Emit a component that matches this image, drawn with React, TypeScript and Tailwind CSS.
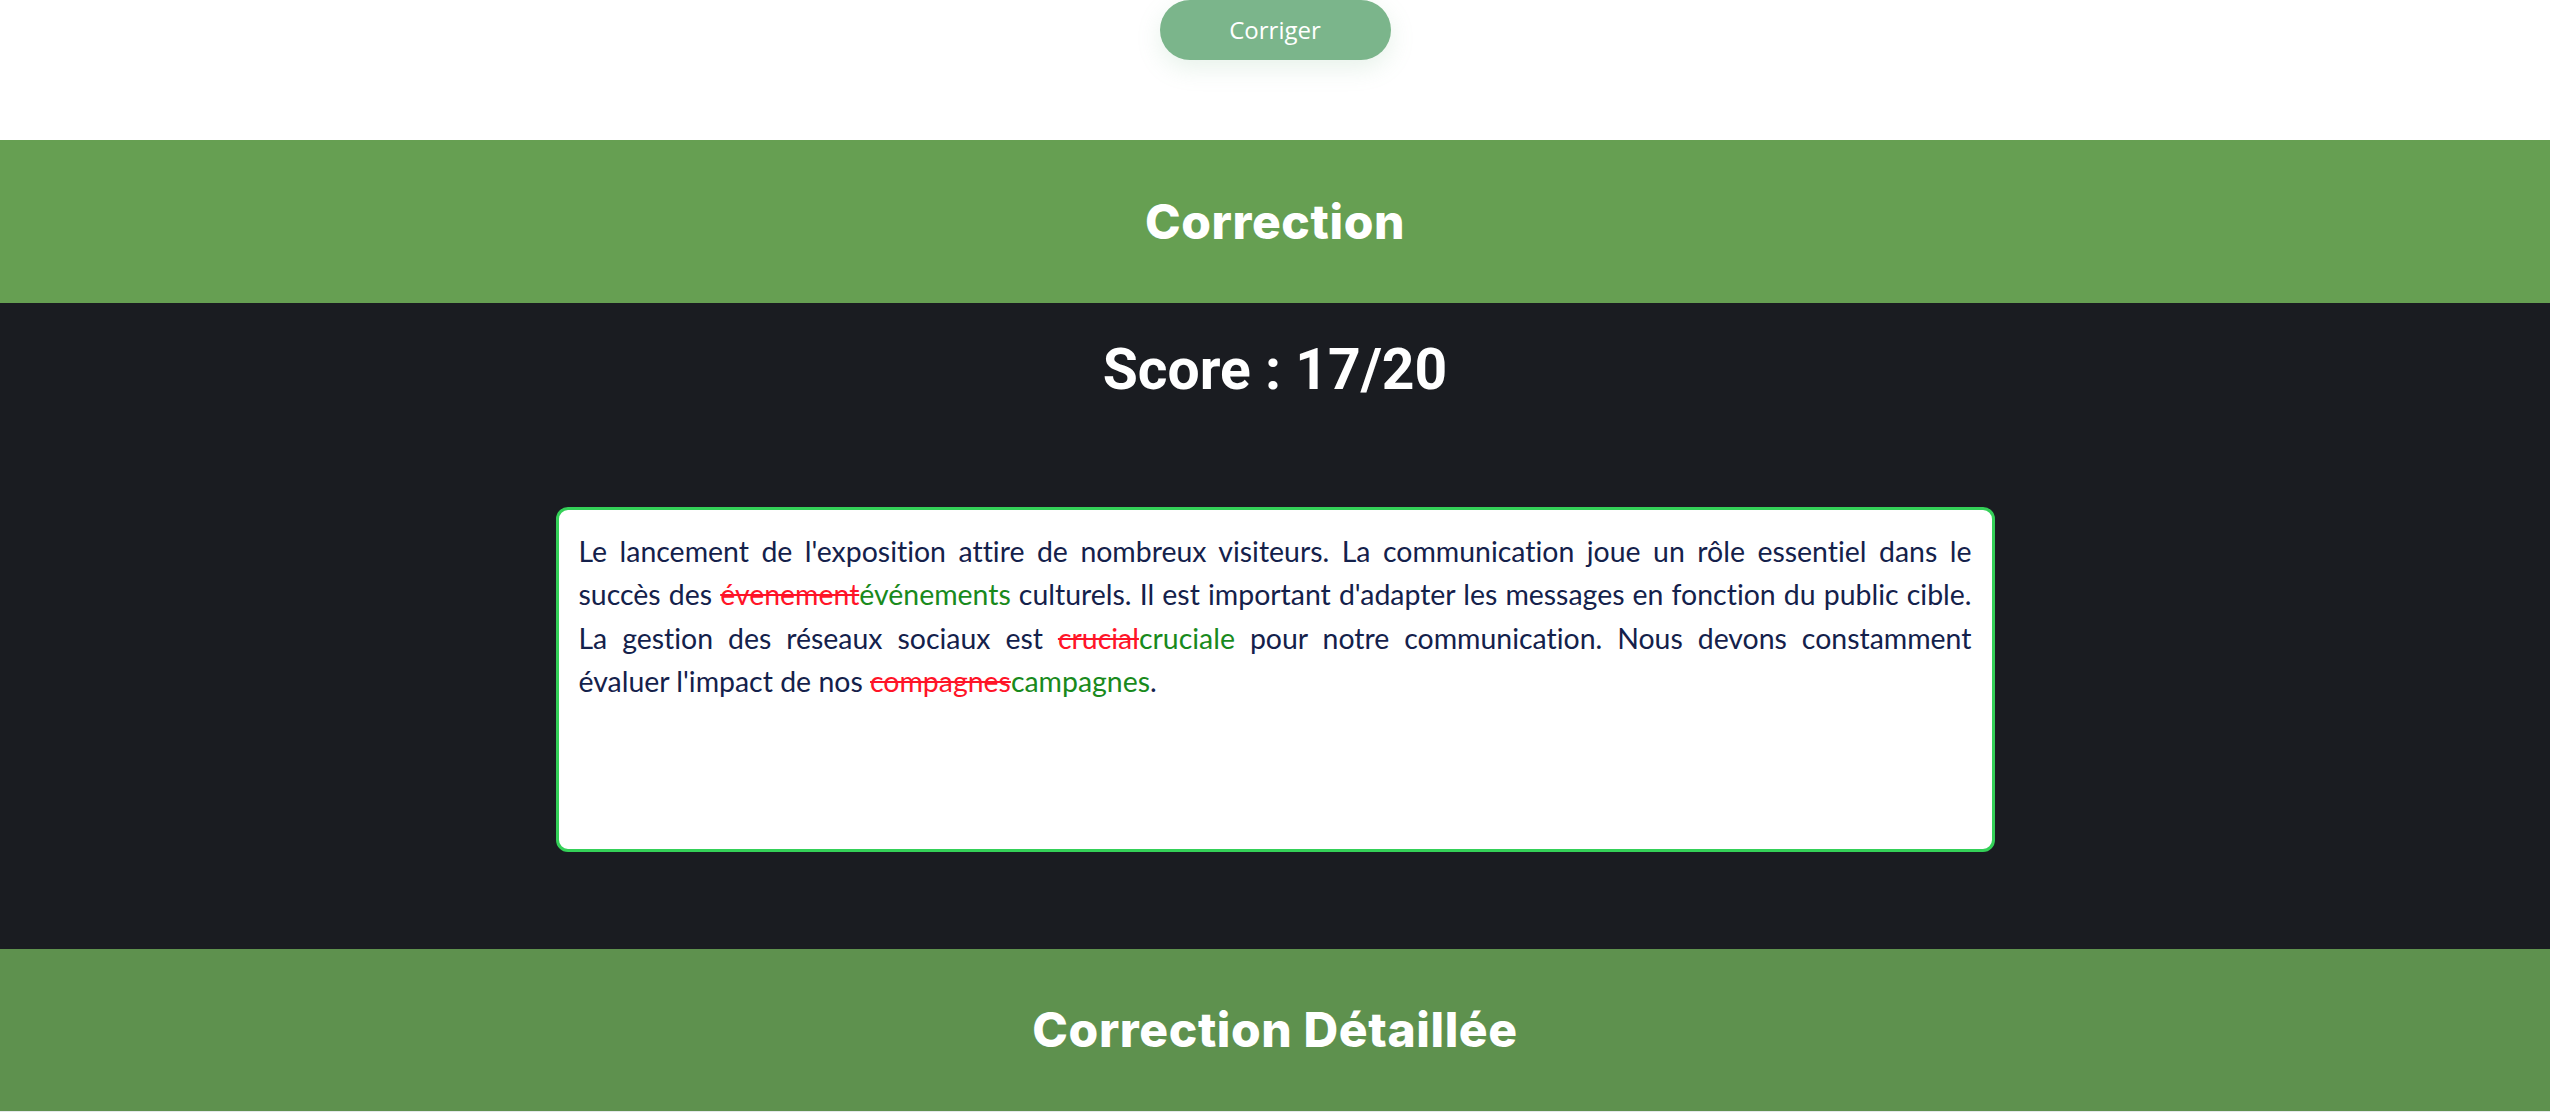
export default function App() {
  const navy = "text-[#14214b]";
  return (
    <div className="w-full min-h-screen bg-white">
      {/* bouton corriger */}
      <div className="h-[140px] flex justify-center">
        <button className="w-[231px] h-[60px] rounded-full bg-[#7bb58b] text-white text-[24px] font-medium font-['Open_Sans',sans-serif] shadow-[0_8px_24px_rgba(123,181,139,0.18)]">
          Corriger
        </button>
      </div>

      <div className="h-[163px] bg-[#669f52] flex items-center justify-center">
        <h2 className="text-white text-[48px] font-extrabold leading-none tracking-[0.6px] font-['Inter',sans-serif]">
          Correction
        </h2>
      </div>

      <div className="bg-[#1a1c21] pt-[38px] pb-[97px] flex flex-col items-center">
        <h3 className="text-white text-[57px] font-bold leading-none font-['Roboto',sans-serif]">
          Score : 17/20
        </h3>
        <div className="mt-[109px] w-[1439px] h-[345px] bg-white border-[3px] border-[#34d058] rounded-[12px] px-[20px] py-[20px]">
          <p
            className={`${navy} text-[28.45px] leading-[43.4px] text-justify font-['Lato',sans-serif] [font-variant-ligatures:none]`}
          >
            Le lancement de l'exposition attire de nombreux visiteurs. La
            communication joue un rôle essentiel dans le succès des{" "}
            <span className="text-[#ff1428] line-through">évenement</span>
            <span className="text-[#198a1c]">événements</span> culturels. Il
            est important d'adapter les messages en fonction du public cible.
            La gestion des réseaux sociaux est{" "}
            <span className="text-[#ff1428] line-through">crucial</span>
            <span className="text-[#198a1c]">cruciale</span> pour notre
            communication. Nous devons constamment évaluer l'impact de nos{" "}
            <span className="text-[#ff1428] line-through">compagnes</span>
            <span className="text-[#198a1c]">campagnes</span>.
          </p>
        </div>
      </div>

      <div className="h-[163px] bg-[#5e914e] flex items-center justify-center border-b border-[#e5e7eb]">
        <h2 className="text-white text-[48px] font-extrabold leading-none tracking-[0.6px] font-['Inter',sans-serif]">
          Correction Détaillée
        </h2>
      </div>
    </div>
  );
}
